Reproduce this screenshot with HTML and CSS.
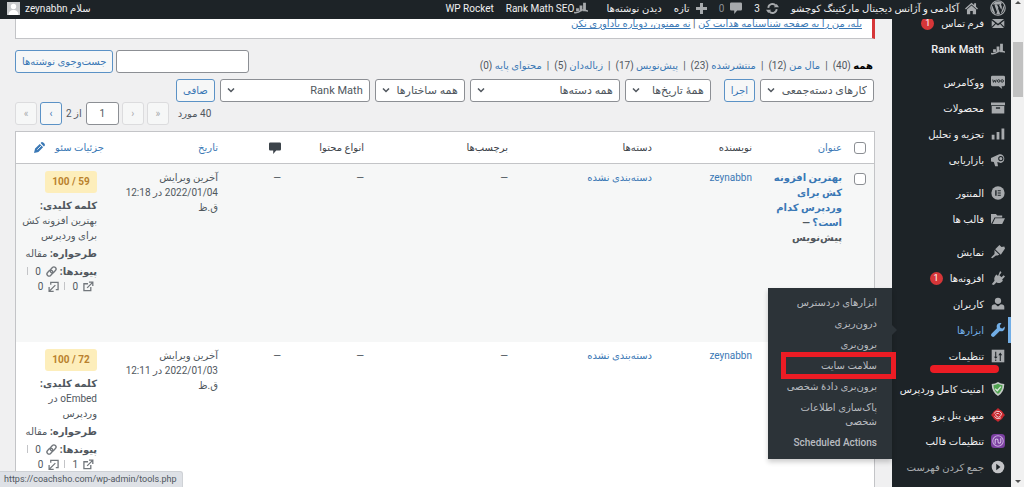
FILE: index.html
```html
<!DOCTYPE html>
<html lang="fa" dir="rtl">
<head>
<meta charset="utf-8">
<title>نوشته‌ها</title>
<link rel="stylesheet" href="styles.css">
</head>
<body>
<div class="scrollbar" aria-hidden="true"><span class="sb-arrow up"></span><span class="sb-thumb"></span><span class="sb-arrow down"></span></div>
<div class="app">
  <header class="adminbar">
    <a href="#" class="wp"><svg width="16" height="16" viewBox="0 0 20 20"><circle cx="10" cy="10" r="9" fill="none" stroke="#a7aaad" stroke-width="1.4"/><path fill="#a7aaad" d="M2.8 7l4 10.6A8 8 0 0 1 2.8 7zM4 4.800C7 1 13 1 15.500 4.200c-1.500 0-2 1.300-1.300 2.600 1 1.700.8 3-.1 5.400L11.300 6.500l1-.1v-.7H8.200v.7l1 .1 1.300 3.200-1.800 5-3-8.200 1-.1v-.7H3.400zM10.200 11l2.500 6.600a8 8 0 0 1-4.800 0zM17 6.700c1.500 4-.2 8.300-3.500 10.200l2.600-7.200c.5-1.400.8-2 .9-3z"/></svg></a>
    <a href="#" class="site"><svg width="13" height="13" viewBox="0 0 20 20"><path fill="#a7aaad" d="M10 1L0 10l1.500 1.500L10 4l8.500 7.500L20 10l-3-2.700V2h-3v2.600zM10 5.500l-7 6V19h5v-5h4v5h5v-7.500z"/></svg><span>آکادمی و آژانس دیجیتال مارکتینگ کوچشو</span></a>
    <a href="#" class="upd"><svg width="13" height="13" viewBox="0 0 20 20" fill="none" stroke="#a7aaad" stroke-width="2.800"><path d="M3.500 9A6.500 6.500 0 0 1 15 5.500M16.500 11A6.500 6.500 0 0 1 5 14.500"/><path fill="#a7aaad" stroke="none" d="M12 8h8l-3.500-5zM8 12H0l3.500 5z"/></svg><span>3</span></a>
    <a href="#" class="cmt"><svg width="12" height="12" viewBox="0 0 20 20"><path fill="#a7aaad" d="M2 1h16q2 0 2 2v9q0 2-2 2h-6l-5 6v-6H2q-2 0-2-2V3q0-2 2-2z"/></svg><span class="dim">0</span></a>
    <a href="#" class="new"><svg width="11" height="11" viewBox="0 0 11 11"><path fill="#a7aaad" d="M4 0h3v4h4v3H7v4H4V7H0V4h4z"/></svg><span>تازه</span></a>
    <a href="#" class="view">دیدن نوشته‌ها</a>
    <a href="#" class="rm"><svg width="14" height="12" viewBox="0 0 20 17"><use href="#i-rank"/></svg><span>Rank Math SEO</span></a>
    <a href="#" class="rocket">WP Rocket</a>
    <a href="#" class="me"><span>سلام zeynabbn</span><svg width="13" height="13" viewBox="0 0 13 13"><path fill="#c9cbcd" d="M0 0h13v13H0z"/><circle cx="6.500" cy="4.500" r="2.700" fill="#fff"/><path fill="#fff" d="M1.500 13c0-3 2-5 5-5s5 2 5 5z"/></svg></a>
  </header>
  <svg width="0" height="0" class="defs"><defs>
    <g id="i-rank"><path fill="#a7aaad" d="M3 9h4v4H3zM8 5h4v8H8zM13 1h4v12h-4z"/><path fill="none" stroke="#a7aaad" stroke-width="2" d="M0 15c5 1 8-1 10-3s4-1 10 1"/></g>
    <g id="i-link" fill="none" stroke="#72777c" stroke-width="1.500"><rect x="-1" y="-2.300" width="7" height="4.600" rx="2.300" transform="translate(6 6) rotate(-45)"/><rect x="-6" y="-2.300" width="7" height="4.600" rx="2.300" transform="translate(6 6) rotate(-45)"/></g>
    <g id="i-out" fill="none" stroke="#72777c" stroke-width="1.400"><path d="M5.500 3H1v7.500h7.500V6.500M4.500 7.500L10 2M6.500 1.200h4.200v4.200"/></g>
    <g id="i-in" fill="none" stroke="#72777c" stroke-width="1.400"><path d="M3 4V1.500h8v8H8.500M8 4.500L2 10.500M1.200 6.500v4.700h5"/></g>
  </defs></svg>
  <div class="cols">
    <nav class="side">
      <ul class="menu">
        <li><a href="#"><svg class="ic" viewBox="0 0 20 20"><path fill="#a7aaad" d="M1 4h18l-9 7zM1 6.500l5 4-5 5zM19 6.500l-5 4 5 5zM7 11.500l3 2.200 3-2.200 5.500 5.500h-17z"/></svg><span>فرم تماس</span><b class="bubble">1</b></a></li>
        <li><a href="#" class="latin"><svg class="ic" viewBox="0 0 20 17"><use href="#i-rank"/></svg><span>Rank Math</span></a></li>
        <li class="sep"><a href="#"><svg class="ic" viewBox="0 0 20 20"><path fill="#a7aaad" d="M2 1h16q2 0 2 2v11q0 2-2 2h-3l1 4-5-4H2q-2 0-2-2V3q0-2 2-2z"/><path fill="none" stroke="#1d2327" stroke-width="1.300" d="M2.500 6.500l1 4 1.500-3 1.500 3 1-4"/><circle cx="11" cy="8.500" r="1.800" fill="none" stroke="#1d2327" stroke-width="1.300"/><circle cx="16" cy="8.500" r="1.800" fill="none" stroke="#1d2327" stroke-width="1.300"/></svg><span>ووکامرس</span></a></li>
        <li><a href="#"><svg class="ic" viewBox="0 0 20 20"><path fill="#a7aaad" d="M0 2h20v4H0zM1 7h18v11H1z"/><path fill="#1d2327" d="M7 9h6v2H7z"/></svg><span>محصولات</span></a></li>
        <li><a href="#"><svg class="ic" viewBox="0 0 20 20"><path fill="#a7aaad" d="M1 11h4v7H1zM8 7h4v11H8zM15 2h4v16h-4z"/></svg><span>تجزیه و تحلیل</span></a></li>
        <li><a href="#"><svg class="ic" viewBox="0 0 20 20"><path fill="#a7aaad" d="M0 7l11-5c3-1 8 1 8 6s-4 7-6 6l-4-1 1 6H6l-2-6-4-1z"/><circle cx="14" cy="8" r="3" fill="none" stroke="#1d2327" stroke-width="1.500"/></svg><span>بازاریابی</span></a></li>
        <li class="sep"><a href="#"><svg class="ic" viewBox="0 0 20 20"><circle cx="10" cy="10" r="9.500" fill="#a7aaad"/><path fill="#1d2327" d="M6 6h2v8H6zM9.500 6H14v1.600H9.500zM9.500 9.200H14v1.600H9.500zM9.500 12.400H14V14H9.500z"/></svg><span>المنتور</span></a></li>
        <li><a href="#"><svg class="ic" viewBox="0 0 20 20"><path fill="#a7aaad" d="M0 3h7l2 2h7v3H5l-3 6-2 3zM6 9h14l-4 8H2z"/></svg><span>قالب ها</span></a></li>
        <li class="sep"><a href="#"><svg class="ic" viewBox="0 0 20 20"><path fill="#a7aaad" d="M12 0l3 3 4-1 1 3-6 9L6 6zM5 7l7 7-3 1-2 0-5 4-2-1 5-5z"/></svg><span>نمایش</span></a></li>
        <li><a href="#"><svg class="ic" viewBox="0 0 20 20"><path fill="#a7aaad" d="M13 0l2 2-3 4 3 3 3-3 2 2-4 4 1 2c-3 4-7 4-9 2l-4 4-3-1 4-5c-1-3 0-7 3-9l2 2z"/></svg><span>افزونه‌ها</span><b class="bubble">1</b></a></li>
        <li><a href="#"><svg class="ic" viewBox="0 0 20 20"><circle cx="10" cy="5.500" r="4.500" fill="#a7aaad"/><path fill="#a7aaad" d="M1 18v-4q0-3 5-3.500l4 3 4-3q5 .5 5 3.500v4z"/></svg><span>کاربران</span></a></li>
        <li class="current"><a href="#"><svg class="ic" viewBox="0 0 20 20"><path fill="#72aee6" d="M15 0q-5-1-6.500 3-.8 2 0 4.500L1 15q-2 2 0 4t4 0l7.500-7.500q3 1 5-.5 3-2 2-6l-3 3-3-1-1-3z"/></svg><span>ابزارها</span></a>
          <ul class="submenu">
            <li><a href="#">ابزارهای دردسترس</a></li>
            <li><a href="#">درون‌ریزی</a></li>
            <li><a href="#">برون‌بری</a></li>
            <li class="marked"><a href="#">سلامت سایت</a></li>
            <li><a href="#">برون‌بری دادهٔ شخصی</a></li>
            <li><a href="#">پاک‌سازی اطلاعات شخصی</a></li>
            <li><a href="#">Scheduled Actions</a></li>
          </ul>
        </li>
        <li class="underlined"><a href="#"><svg class="ic" viewBox="0 0 20 20"><path fill="#a7aaad" d="M1 1h18v18H1z"/><path fill="#1d2327" d="M6 4h1.500v7h2l-2.700 3L4 11h2zM6 15h1.500v2H6zM12.500 17V9h-2l2.700-4L16 9h-2v8z"/></svg><span>تنظیمات</span></a></li>
        <li class="sep"><a href="#"><svg class="ic" viewBox="0 0 20 20"><path fill="#c5cbc6" d="M10 0q4 3 9 3 0 12-9 17Q1 15 1 3q5 0 9-3z"/><path fill="#51a351" d="M10 2.500q3 2 6.500 2.200Q16 13 10 17.200 4 13 3.500 4.700 7 4.500 10 2.500z"/><path fill="none" stroke="#dfe8df" stroke-width="1.800" d="M6 9.500l3 3 5-6"/></svg><span>امنیت کامل وردپرس</span></a></li>
        <li><a href="#"><svg class="ic" viewBox="0 0 20 20"><path fill="#c9282f" d="M10 0l10 10-10 10L0 10z"/><circle cx="10" cy="10" r="8" fill="#c9282f"/><path fill="none" stroke="#f3d6d7" stroke-width="1.400" d="M4 8q3-5 8-3t2 6-6 1 0-4 4 1M5 12q3 5 9 2"/></svg><span>میهن پنل پرو</span></a></li>
        <li><a href="#"><svg class="ic" viewBox="0 0 20 20"><rect width="20" height="20" rx="5" fill="#7a3fa0"/><circle cx="10" cy="10" r="7.500" fill="none" stroke="#c9abdd" stroke-width="1.500"/><path fill="none" stroke="#d9c4e8" stroke-width="1.500" d="M6 14V9q0-2 2-2t2 2v2q0 2 2 2t2-2V6"/></svg><span>تنظیمات قالب</span></a></li>
        <li class="collapse"><button type="button"><svg class="ic" viewBox="0 0 20 20"><circle cx="10" cy="10" r="9" fill="#c3c4c7"/><path fill="#1d2327" d="M7.500 5.500l6 4.500-6 4.500z"/></svg><span>جمع کردن فهرست</span></button></li>
      </ul>
    </nav>
    <main>
      <div class="notice"><a href="#">بله، من را به صفحه شناسنامه هدایت کن</a> | <a href="#">نه ممنون، دوباره یادآوری نکن</a></div>
      <div class="top">
        <ul class="views">
          <li><a href="#" class="on">همه</a> (40)</li><li><a href="#">مال من</a> (12)</li><li><a href="#">منتشرشده</a> (23)</li><li><a href="#">پیش‌نویس</a> (17)</li><li><a href="#">زباله‌دان</a> (5)</li><li><a href="#">محتوای پایه</a> (0)</li>
        </ul>
        <form class="search"><input type="text" aria-label="جست‌وجو"><button type="button">جست‌وجوی نوشته‌ها</button></form>
      </div>
      <div class="filters">
        <select class="w-bulk" aria-label="کارهای دسته‌جمعی"><option>کارهای دسته‌جمعی</option></select>
        <button type="button" class="apply">اجرا</button>
        <select class="w-date" aria-label="تاریخ"><option>همهٔ تاریخ‌ها</option></select>
        <select class="w-wide" aria-label="دسته"><option>همه دسته‌ها</option></select>
        <select class="w-type" aria-label="ساختار"><option>همه ساختارها</option></select>
        <select class="w-wide" aria-label="Rank Math"><option>Rank Math</option></select>
        <button type="button">صافی</button>
      </div>
      <div class="pages">
        <span class="count">40 مورد</span>
        <button type="button" disabled>«</button><button type="button" disabled>‹</button>
        <input type="text" value="1" aria-label="برگه"><span>از 2</span>
        <button type="button">›</button><button type="button" disabled>»</button>
      </div>
      <table>
        <colgroup><col class="c-check"><col class="c-title"><col class="c-author"><col class="c-cat"><col class="c-cat"><col class="c-kind"><col class="c-com"><col><col class="c-seo"></colgroup>
        <thead><tr>
          <th><input type="checkbox" aria-label="انتخاب همه"></th><th><a href="#">عنوان</a></th><th>نویسنده</th><th>دسته‌ها</th><th>برچسب‌ها</th><th>انواع محتوا</th>
          <th><svg width="12" height="12" viewBox="0 0 20 20"><path fill="#3c434a" d="M2 1h16q2 0 2 2v9q0 2-2 2h-6l-5 6v-6H2q-2 0-2-2V3q0-2 2-2z"/></svg></th>
          <th><a href="#">تاریخ</a></th>
          <th><span class="seohead"><a href="#">جزئیات سئو</a><svg width="11" height="11" viewBox="0 0 20 20"><path fill="#3a78b5" d="M0 20l2-8 8.500-8.500 6 6L8 18zM12 2l2-2q2 0 4 2t2 4l-2 2z"/><path stroke="#fff" stroke-width="1.500" d="M6 14l7-7"/></svg></span></th>
        </tr></thead>
        <tbody>
          <tr class="alt">
            <td><input type="checkbox" aria-label="انتخاب"></td>
            <td class="title"><a href="#">بهترین افزونه کش برای وردپرس کدام است؟</a> — پیش‌نویس</td>
            <td><a href="#">zeynabbn</a></td><td><a href="#">دسته‌بندی نشده</a></td><td>—</td><td>—</td><td>—</td>
            <td>آخرین ویرایش<br>2022/01/04 در 12:18 ق.ظ</td>
            <td class="seo"><span class="score">59 / 100</span><p><strong>کلمه کلیدی:</strong><br>بهترین افزونه کش برای وردپرس</p><p><strong>طرحواره:</strong> مقاله</p><p class="links"><strong>پیوندها:</strong><svg class="li" viewBox="0 0 12 12"><use href="#i-link"/></svg>0<i></i><br><svg class="li" viewBox="0 0 12 12"><use href="#i-out"/></svg>0<i></i><svg class="li" viewBox="0 0 12 12"><use href="#i-in"/></svg>0</p></td>
          </tr>
          <tr>
            <td></td>
            <td class="title"></td>
            <td><a href="#">zeynabbn</a></td><td><a href="#">دسته‌بندی نشده</a></td><td>—</td><td>—</td><td>—</td>
            <td>آخرین ویرایش<br>2022/01/03 در 12:11 ق.ظ</td>
            <td class="seo"><span class="score">72 / 100</span><p><strong>کلمه کلیدی:</strong><br>oEmbed در<br>وردپرس</p><p><strong>طرحواره:</strong> مقاله</p><p class="links"><strong>پیوندها:</strong><svg class="li" viewBox="0 0 12 12"><use href="#i-link"/></svg>0<i></i><br><svg class="li" viewBox="0 0 12 12"><use href="#i-out"/></svg>1<i></i><svg class="li" viewBox="0 0 12 12"><use href="#i-in"/></svg>0</p></td>
          </tr>
        </tbody>
      </table>
    </main>
  </div>
</div>
<div class="status" dir="ltr">https://coachsho.com/wp-admin/tools.php</div>
</body>
</html>
```
FILE: styles.css
```css
* { box-sizing: border-box; }
body {
  margin: 0;
  display: flex;
  height: 100vh;
  overflow: hidden;
  background: #f0f0f1;
  color: #50575e;
  font: 10px/15px Roboto, "DejaVu Sans", sans-serif;
}
a { color: #3a78b5; text-decoration: none; }
ul { list-style: none; margin: 0; padding: 0; }
p { margin: 0; }
svg { flex: none; }
.defs { position: absolute; }
button, input, select { font: inherit; color: inherit; margin: 0; }

.scrollbar { width: 13px; background: #f1f1f1; display: flex; flex-direction: column; align-items: center; padding: 1px 0 4px; }
.sb-arrow { border: 3px solid transparent; }
.up { border-bottom-color: #505050; border-top: 0; }
.down { border-top-color: #505050; border-bottom: 0; margin-top: auto; }
.sb-thumb { width: 10px; height: 55px; margin-top: 38px; background: #c1c1c1; }

.app { flex: 1; min-width: 0; display: flex; flex-direction: column; }
.adminbar { height: 19px; flex: none; background: #1d2327; display: flex; align-items: center; gap: 12px; padding: 0 5px 3px 7px; position: relative; z-index: 2; white-space: nowrap; }
.adminbar a { color: #f0f0f1; display: flex; align-items: center; gap: 6px; }
.adminbar .view { margin-left: 6px; }
.adminbar .rm { gap: 0; }
.adminbar .me { margin-right: auto; gap: 5px; }
.adminbar .dim { color: #8c8f94; }

.cols { flex: 1; min-height: 0; display: flex; overflow: hidden; }
.side { width: 119px; flex: none; background: #1d2327; position: relative; z-index: 1; }
.menu { margin-top: -9px; }
.menu > li { position: relative; }
.sep { margin-top: 7px; }
.menu > li > a, .collapse button { width: 100%; height: 26px; display: flex; align-items: center; gap: 7px; padding: 0 6px 0 0; color: #f0f0f1; font-weight: 500; white-space: nowrap; background: none; border: 0; }
.menu > li > .latin { font-size: 11px; }
.ic { width: 14px; height: 14px; }
.bubble { width: 13px; height: 13px; border-radius: 50%; background: #d63638; color: #fff; font: 9px/13px Roboto, sans-serif; text-align: center; }
.menu .collapse button { color: #a7aaad; font-weight: 400; }
.menu > .current > a { color: #72aee6; border-right: 3px solid #72aee6; padding-right: 3px; }
.underlined::after { content: ""; position: absolute; right: 12px; left: 38px; top: 22px; height: 8px; border-radius: 4px; background: #ec1c24; }

.submenu { position: absolute; right: 100%; top: -29px; width: 124px; padding: 5px 0; background: #2c3338; box-shadow: 0 3px 5px rgba(0,0,0,.2); }
.submenu::after { content: ""; position: absolute; left: 100%; top: 37px; border: 5px solid transparent; border-left-color: #2c3338; border-right: 0; }
.submenu li { position: relative; padding: 3px 15px 4px 12px; line-height: 14px; }
.submenu a { color: #b9bcc0; font-weight: 500; }
.marked::after { content: ""; position: absolute; left: 13px; right: -4px; top: -4px; bottom: -2px; border: 5px solid #ec1c24; }

main { flex: 1; min-width: 0; padding: 0 17px 0 15px; display: flex; flex-direction: column; }
.notice { height: 20px; flex: none; background: #fff; border: 1px solid #c3c4c7; border-top: 0; border-right: 3px solid #d63638; padding: 0 10px; line-height: 10px; }
.notice a { text-decoration: underline; }
.top { display: flex; justify-content: space-between; align-items: flex-end; margin-top: 11px; }
.views { display: flex; white-space: nowrap; padding-right: 2px; }
.views li + li::before { content: "|"; margin: 0 5px; }
.views .on { color: #000; font-weight: 700; }
.search { display: flex; gap: 3px; }
.search input { width: 133px; }
main button, main input[type="text"], select { height: 23px; border: 1px solid #8c8f94; border-radius: 3px; background: #fff; padding: 0 8px; }
main button { border-color: #5b92c6; background: #f6f7f7; color: #3a78b5; padding: 0 6px; white-space: nowrap; }
.filters { display: flex; gap: 5px; margin-top: 6px; padding-right: 1px; }
.apply { margin-left: 8px; }
select { appearance: none; padding: 0 6px; min-width: 0; font-size: 11px; background: #fff url("data:image/svg+xml,%3Csvg xmlns='http://www.w3.org/2000/svg' width='8' height='5'%3E%3Cpath d='M1 0.500l3 3 3-3' fill='none' stroke='%2350575e' stroke-width='1.500'/%3E%3C/svg%3E") no-repeat left 6px center; }
.w-bulk { width: 114px; }
.w-date { width: 86px; }
.w-wide { width: 150px; }
.w-type { width: 90px; }
.pages { display: flex; justify-content: flex-end; align-items: center; gap: 3px; }
.pages .count { margin-left: 6px; }
.pages button { width: 22px; padding: 0; line-height: 18px; }
.pages button:disabled { border-color: #dcdcde; color: #a7aaad; }
.pages input[type="text"] { width: 33px; text-align: center; padding: 0; }
.pages span { margin: 0 1px; }

table { margin-top: 6px; width: 100%; table-layout: fixed; border-collapse: separate; border-spacing: 0; background: #fff; border: 1px solid #c3c4c7; }
.c-check { width: 24px; }
.c-title { width: 90px; }
.c-author { width: 100px; }
.c-cat { width: 144px; }
.c-kind { width: 83px; }
.c-com { width: 63px; }
.c-seo { width: 96px; }
th { height: 32px; padding: 0 8px; text-align: right; font-weight: 400; border-bottom: 1px solid #c3c4c7; white-space: nowrap; color: #3c434a; vertical-align: middle; }
th svg { vertical-align: middle; }
td { height: 178px; padding: 6px 8px; vertical-align: top; }
.alt { background: #f6f7f7; }
th:first-child, td:first-child { padding-left: 0; }
input[type="checkbox"] { appearance: none; display: block; width: 12px; height: 12px; border: 1px solid #8c8f94; border-radius: 3px; background: #fff; }
td input[type="checkbox"] { margin-top: 3px; }
.title { font-weight: 700; }
.seohead { display: flex; align-items: center; gap: 10px; }
td.seo { padding: 7px 15px 0 4px; }
.score { display: block; width: 52px; height: 22px; line-height: 22px; margin-bottom: 5px; border-radius: 3px; background: #fdeebb; color: #b9812d; font-size: 10px; font-weight: 700; text-align: center; }
.seo p { margin-bottom: 3px; white-space: nowrap; }
.seo p:first-of-type { white-space: normal; }
.li { width: 11px; height: 11px; vertical-align: -2px; margin: 0 3px 0 5px; }
.links i { display: inline-block; height: 8px; border-left: 1px solid #c3c4c7; margin: 0 7px 0 2px; }

.status { position: fixed; left: 0; bottom: 0; padding: 0 5px 0 4px; border-radius: 0 3px 0 0; background: #dee1e6; border: 1px solid #cfd2d6; border-width: 1px 1px 0 0; color: #50575e; font-size: 9px; z-index: 3; }
```
